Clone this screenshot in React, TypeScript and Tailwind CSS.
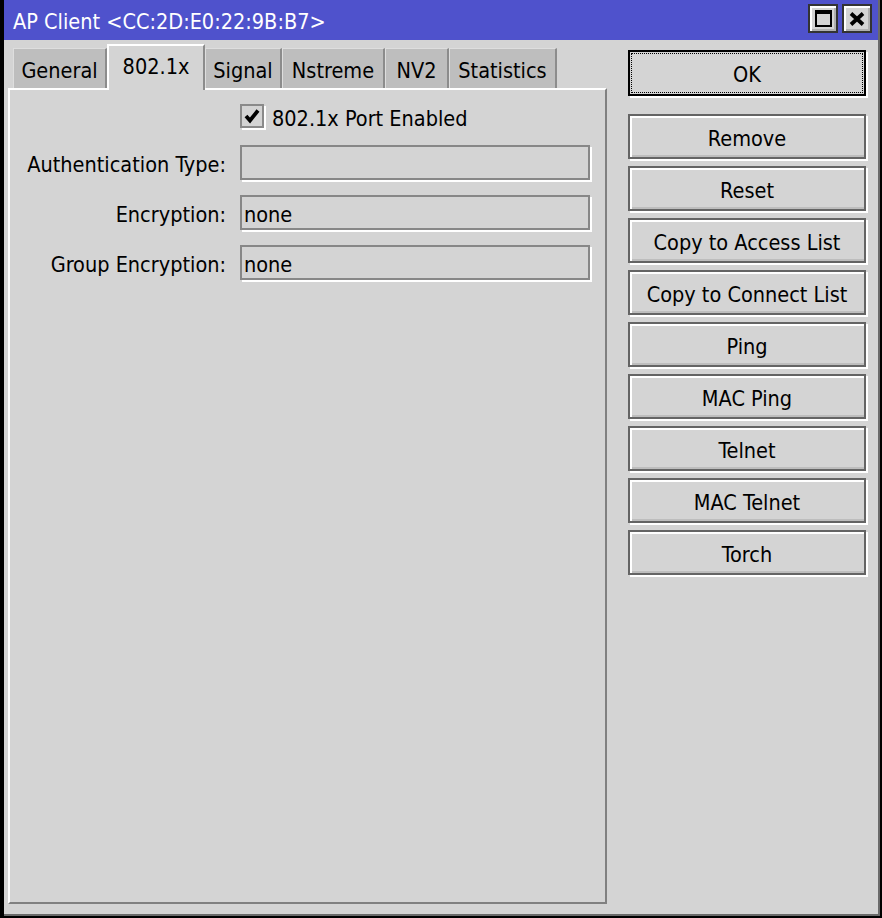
import React from "react";

const tabs = [
  { label: "General", w: "w-[94px]", active: false },
  { label: "802.1x", w: "w-[98px]", active: true },
  { label: "Signal", w: "w-[77px]", active: false },
  { label: "Nstreme", w: "w-[103px]", active: false },
  { label: "NV2", w: "w-[64px]", active: false },
  { label: "Statistics", w: "w-[108px]", active: false },
];

const buttons = [
  "Remove",
  "Reset",
  "Copy to Access List",
  "Copy to Connect List",
  "Ping",
  "MAC Ping",
  "Telnet",
  "MAC Telnet",
  "Torch",
];

function Field({ label, value }: { label: string; value: string }) {
  return (
    <div className="flex items-center h-[35px]">
      <div className="w-[216px] text-right whitespace-nowrap pt-[4px]">{label}</div>
      <div className="ml-[14px] w-[350px] h-[35px] border-2 border-[#878787] shadow-[2px_2px_0_#ffffff] flex items-center pl-[2px] pt-[4px] whitespace-nowrap">
        {value}
      </div>
    </div>
  );
}

export default function App() {
  return (
    <div className="w-[882px] h-[918px] bg-black flex font-['DejaVu_Sans_Condensed','Liberation_Sans',sans-serif] text-[21.5px] leading-none text-black">
      <div className="ml-[4px] w-[876px] h-[916px] bg-[#d4d4d4] border-r-2 border-b-2 border-[#6a6a6a] flex flex-col">
        {/* Title bar */}
        <div className="h-[40px] bg-[#4f52cc] flex items-start pl-[9px] pr-[6px]">
          <div className="text-white text-[21.5px] h-[40px] flex items-center pt-[3px] whitespace-nowrap">
            AP Client &lt;CC:2D:E0:22:9B:B7&gt;
          </div>
          <div className="ml-auto mt-[4px] flex gap-[4px]">
            <div className="w-[30px] h-[29px] bg-[#d4d4d4] border-2 border-[#333333] shadow-[inset_2px_2px_0_#ffffff,inset_-2px_-2px_0_#b0b0b0] flex items-center justify-center">
              <div className="w-[17px] h-[17px] border-2 border-t-4 border-black" />
            </div>
            <div className="w-[30px] h-[29px] bg-[#d4d4d4] border-2 border-[#333333] shadow-[inset_2px_2px_0_#ffffff,inset_-2px_-2px_0_#b0b0b0] flex items-center justify-center">
              <svg width="16" height="14" viewBox="0 0 16 14">
                <path d="M2 1.5 L14 12.5 M14 1.5 L2 12.5" stroke="#000" strokeWidth="3.8" />
              </svg>
            </div>
          </div>
        </div>

        {/* Body */}
        <div className="flex flex-1 pl-[4px]">
          {/* Left: tabs + panel */}
          <div className="w-[599px] flex flex-col pt-[4px] pb-[10px]">
            <div className="h-[44px] flex items-end pl-[5px]">
              {tabs.map((t) =>
                t.active ? (
                  <div
                    key={t.label}
                    className={`${t.w} h-[46px] -mb-[2px] relative z-10 bg-[#d4d4d4] border-t-2 border-l-2 border-r-2 border-t-white border-l-white border-r-[#8c8c8c] flex items-center justify-center pb-[2px]`}
                  >
                    {t.label}
                  </div>
                ) : (
                  <div
                    key={t.label}
                    className={`${t.w} h-[40px] bg-[#bebebe] border-t border-l border-r-2 border-t-[#dedede] border-l-[#dedede] border-r-[#8c8c8c] flex items-center justify-center pt-[4px]`}
                  >
                    {t.label}
                  </div>
                )
              )}
            </div>
            <div className="flex-1 border-2 border-t-white border-l-white border-r-[#808080] border-b-[#808080] flex flex-col pt-[14px]">
              <div className="flex items-center pl-[230px] h-[24px]">
                <div className="w-[24px] h-[24px] border-2 border-[#8a8a8a] shadow-[2px_2px_0_#ffffff] flex items-center justify-center">
                  <svg width="16" height="16" viewBox="0 0 16 16">
                    <path d="M2 8 L6 12.5 L14 2.5" stroke="#000" strokeWidth="3.8" fill="none" />
                  </svg>
                </div>
                <div className="ml-[8px] pt-[6px] whitespace-nowrap">802.1x Port Enabled</div>
              </div>
              <div className="mt-[17px] flex flex-col gap-[15px]">
                <Field label="Authentication Type:" value="" />
                <Field label="Encryption:" value="none" />
                <Field label="Group Encryption:" value="none" />
              </div>
            </div>
          </div>

          {/* Right: buttons */}
          <div className="ml-[21px] w-[238px] flex flex-col pt-[10px]">
            <div className="h-[46px] border-2 border-black shadow-[2px_2px_0_#ffffff] p-[1px] flex">
              <div className="flex-1 border border-dotted border-black flex items-center justify-center pt-[4px]">
                OK
              </div>
            </div>
            <div className="mt-[18px] flex flex-col gap-[7px]">
              {buttons.map((b) => (
                <div
                  key={b}
                  className="h-[45px] border-2 border-[#646464] shadow-[inset_2px_2px_0_#ffffff,inset_0_-2px_0_#bdbdbd,2px_2px_0_#ffffff] flex items-center justify-center pt-[4px] whitespace-nowrap"
                >
                  {b}
                </div>
              ))}
            </div>
          </div>
        </div>
      </div>
    </div>
  );
}
